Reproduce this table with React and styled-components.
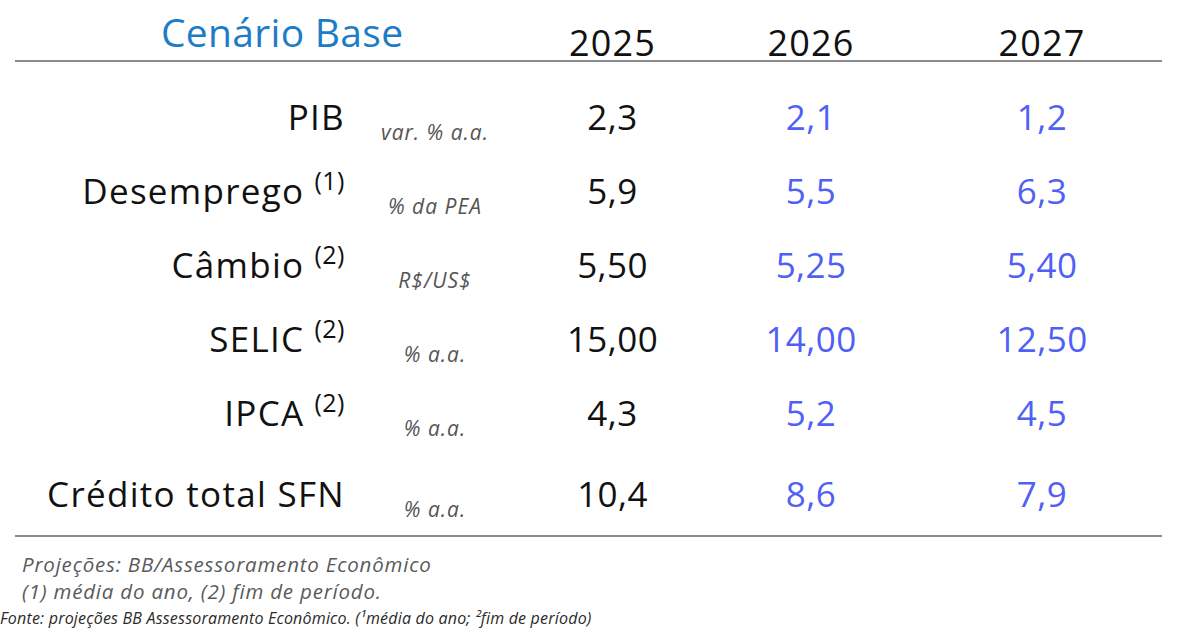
import React from 'react';
import styled, { createGlobalStyle } from 'styled-components';

const GlobalStyle = createGlobalStyle`
  body {
    margin: 0;
    background: #ffffff;
    font-family: "Open Sans", "Noto Sans", sans-serif;
    color: #111;
  }
`;

const COLS = '330px 180px 175px 222px 240px';

const Page = styled.div`
  width: 1178px;
  height: 634px;
  overflow: hidden;
`;

const Table = styled.div`
  margin-left: 15px;
  width: 1147px;
`;

const HeaderRow = styled.div`
  display: grid;
  grid-template-columns: ${COLS};
  height: 60px;
  align-items: end;
  border-bottom: 2px solid #8c8c8c;
`;

const Title = styled.div`
  grid-column: 1 / 3;
  padding-left: 146px;
  font-size: 39px;
  line-height: 1;
  color: #1e7cc6;
  margin-bottom: 9px;
  letter-spacing: 0.3px;
`;

const Year = styled.div`
  text-align: center;
  font-size: 36px;
  line-height: 1;
  margin-bottom: -1px;
  letter-spacing: 1.2px;
`;

const Body = styled.div`
  padding-top: 17px;
  padding-bottom: 5px;
  border-bottom: 2px solid #8c8c8c;
`;

const Row = styled.div`
  display: grid;
  grid-template-columns: ${COLS};
  height: 74px;
  align-items: center;
  margin-top: ${(p) => (p.$spaced ? '7px' : '0')};
`;

const Label = styled.div`
  text-align: right;
  font-size: 35px;
  line-height: 1;
  white-space: nowrap;
  letter-spacing: 1.3px;
`;

const Note = styled.sup`
  font-size: 25px;
  margin-left: 10px;
  vertical-align: 0.55em;
  line-height: 0;
  letter-spacing: 0.5px;
`;

const Unit = styled.div`
  text-align: center;
  font-size: 21px;
  font-style: italic;
  color: #555;
  margin-top: 32px;
  line-height: 1;
  white-space: nowrap;
  letter-spacing: 1px;
`;

const Value = styled.div`
  text-align: center;
  font-size: 35px;
  line-height: 1;
  letter-spacing: 0.4px;
  color: ${(p) => (p.$projected ? '#5060f5' : '#111')};
`;

const Footer = styled.div`
  padding: 14px 0 0 22px;
  font-size: 20.5px;
  font-style: italic;
  color: #5a5a5a;
  line-height: 27px;
  letter-spacing: 0.8px;
`;

const Source = styled.div`
  font-size: 16px;
  font-style: italic;
  color: #2a2a2a;
  line-height: 20px;
  margin-top: 3px;
  letter-spacing: 0.2px;
`;

const rows = [
  { label: 'PIB', unit: 'var. % a.a.', values: ['2,3', '2,1', '1,2'] },
  { label: 'Desemprego', note: '(1)', unit: '% da PEA', values: ['5,9', '5,5', '6,3'] },
  { label: 'Câmbio', note: '(2)', unit: 'R$/US$', values: ['5,50', '5,25', '5,40'] },
  { label: 'SELIC', note: '(2)', unit: '% a.a.', values: ['15,00', '14,00', '12,50'] },
  { label: 'IPCA', note: '(2)', unit: '% a.a.', values: ['4,3', '5,2', '4,5'] },
  { label: 'Crédito total SFN', unit: '% a.a.', values: ['10,4', '8,6', '7,9'], spaced: true },
];

export default function App() {
  return (
    <Page>
      <GlobalStyle />
      <Table>
        <HeaderRow>
          <Title>Cenário Base</Title>
          <Year>2025</Year>
          <Year>2026</Year>
          <Year>2027</Year>
        </HeaderRow>
        <Body>
          {rows.map((r) => (
            <Row key={r.label} $spaced={r.spaced}>
              <Label>
                {r.label}
                {r.note && <Note>{r.note}</Note>}
              </Label>
              <Unit>{r.unit}</Unit>
              {r.values.map((v, i) => (
                <Value key={i} $projected={i > 0}>{v}</Value>
              ))}
            </Row>
          ))}
        </Body>
      </Table>
      <Footer>
        <div>Projeções: BB/Assessoramento Econômico</div>
        <div>(1) média do ano, (2) fim de período.</div>
      </Footer>
      <Source>Fonte: projeções BB Assessoramento Econômico. (¹média do ano; ²fim de período)</Source>
    </Page>
  );
}
